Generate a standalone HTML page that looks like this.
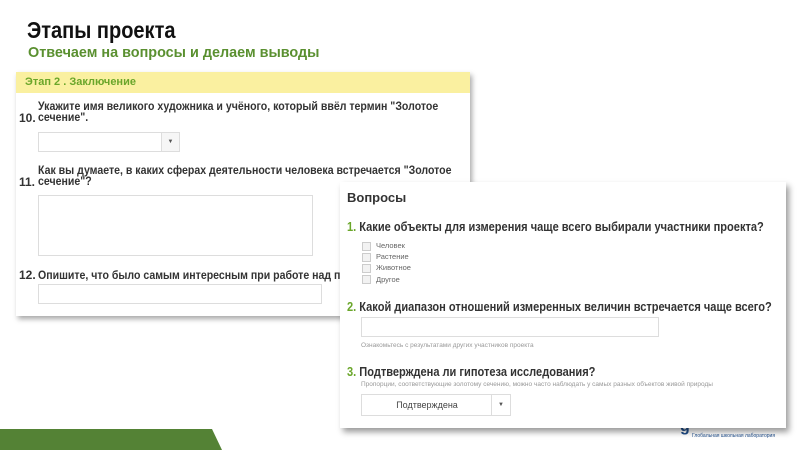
<!DOCTYPE html>
<html><head><meta charset="utf-8"><style>
*{margin:0;padding:0;box-sizing:border-box}
body{width:800px;height:450px;overflow:hidden;background:#fff;font-family:"Liberation Sans",sans-serif;position:relative}
.a{position:absolute;white-space:nowrap;transform-origin:0 0}
.g{color:#6aa62a}
.q{font-weight:bold;color:#333;font-size:12px}
.sx{transform:scaleX(0.88)}
.box{position:absolute;border:1px solid #ddd;background:#fff}
.cb{display:inline-block;width:9px;height:9px;border:1px solid #ccc;background:#f2f2f2;vertical-align:middle;margin-right:5px}
.h{font-size:13px;font-weight:bold;color:#333;transform:scaleX(0.85)}
</style></head><body>
<div class="a" style="left:27px;top:17px;font-size:23px;font-weight:bold;color:#111;transform:scaleX(0.87)">Этапы проекта</div>
<div class="a" style="left:28px;top:44px;font-size:15px;font-weight:bold;color:#5a9030;transform:scaleX(0.96)">Отвечаем на вопросы и делаем выводы</div>

<div style="position:absolute;left:16px;top:72px;width:454px;height:244px;background:#fff;box-shadow:2px 3px 5px rgba(0,0,0,.35)">
 <div style="height:21px;background:#faf0a0;padding:4px 9px;font-size:11px;font-weight:bold;color:#6aa62a">Этап 2 . Заключение</div>
</div>
<div class="a q sx" style="left:38px;top:101px;line-height:11px">Укажите имя великого художника и учёного, который ввёл термин "Золотое<br>сечение".</div>
<div class="a q g" style="left:19px;top:111px">10.</div>
<div class="box" style="left:38px;top:132px;width:142px;height:20px"><div style="position:absolute;right:0;top:0;width:18px;height:18px;border-left:1px solid #ddd;background:#f6f6f6;font-size:6px;color:#555;text-align:center;line-height:18px">▼</div></div>
<div class="a q sx" style="left:38px;top:165px;line-height:11px">Как вы думаете, в каких сферах деятельности человека встречается "Золотое<br>сечение"?</div>
<div class="a q g" style="left:19px;top:175px">11.</div>
<div class="box" style="left:38px;top:195px;width:275px;height:61px"></div>
<div class="a q sx" style="left:38px;top:268px">Опишите, что было самым интересным при работе над п</div>
<div class="a q g" style="left:19px;top:268px">12.</div>
<div class="box" style="left:38px;top:284px;width:284px;height:20px"></div>

<div style="position:absolute;left:0;top:429px;width:222px;height:21px;background:#548235;clip-path:polygon(0 0,212px 0,222px 21px,0 21px)"></div>
<div class="a" style="left:680px;top:418px;font-size:16px;font-weight:bold;color:#1f4e8c">g</div>
<div class="a" style="left:692px;top:433px;font-size:5px;color:#1f4e8c">Глобальная школьная лаборатория</div>

<div style="position:absolute;left:340px;top:182px;width:446px;height:246px;background:#fff;box-shadow:3px 4px 6px rgba(0,0,0,.4)">
 <div class="a" style="left:7px;top:8px;font-size:13px;font-weight:bold;color:#333">Вопросы</div>
 <div class="a h" style="left:7px;top:37px"><span class="g">1.</span> Какие объекты для измерения чаще всего выбирали участники проекта?</div>
 <div class="a" style="left:22px;top:58px;font-size:7.5px;color:#666;line-height:11.2px"><span class="cb"></span>Человек<br><span class="cb"></span>Растение<br><span class="cb"></span>Животное<br><span class="cb"></span>Другое</div>
 <div class="a h" style="left:7px;top:117px"><span class="g">2.</span> Какой диапазон отношений измеренных величин встречается чаще всего?</div>
 <div class="box" style="left:21px;top:135px;width:298px;height:20px"></div>
 <div class="a" style="left:21px;top:160px;font-size:6.5px;color:#999">Ознакомьтесь с результатами других участников проекта</div>
 <div class="a h" style="left:7px;top:182px"><span class="g">3.</span> Подтверждена ли гипотеза исследования?</div>
 <div class="a" style="left:21px;top:199px;font-size:6.5px;color:#999">Пропорции, соответствующие золотому сечению, можно часто наблюдать у самых разных объектов живой природы</div>
 <div class="box" style="left:21px;top:212px;width:150px;height:22px;font-size:9px;color:#444"><div style="position:absolute;left:0;width:130px;text-align:center;top:5px">Подтверждена</div><div style="position:absolute;right:0;top:0;width:19px;height:20px;border-left:1px solid #ddd;font-size:6px;text-align:center;line-height:20px;color:#555">▼</div></div>
</div>
</body></html>
